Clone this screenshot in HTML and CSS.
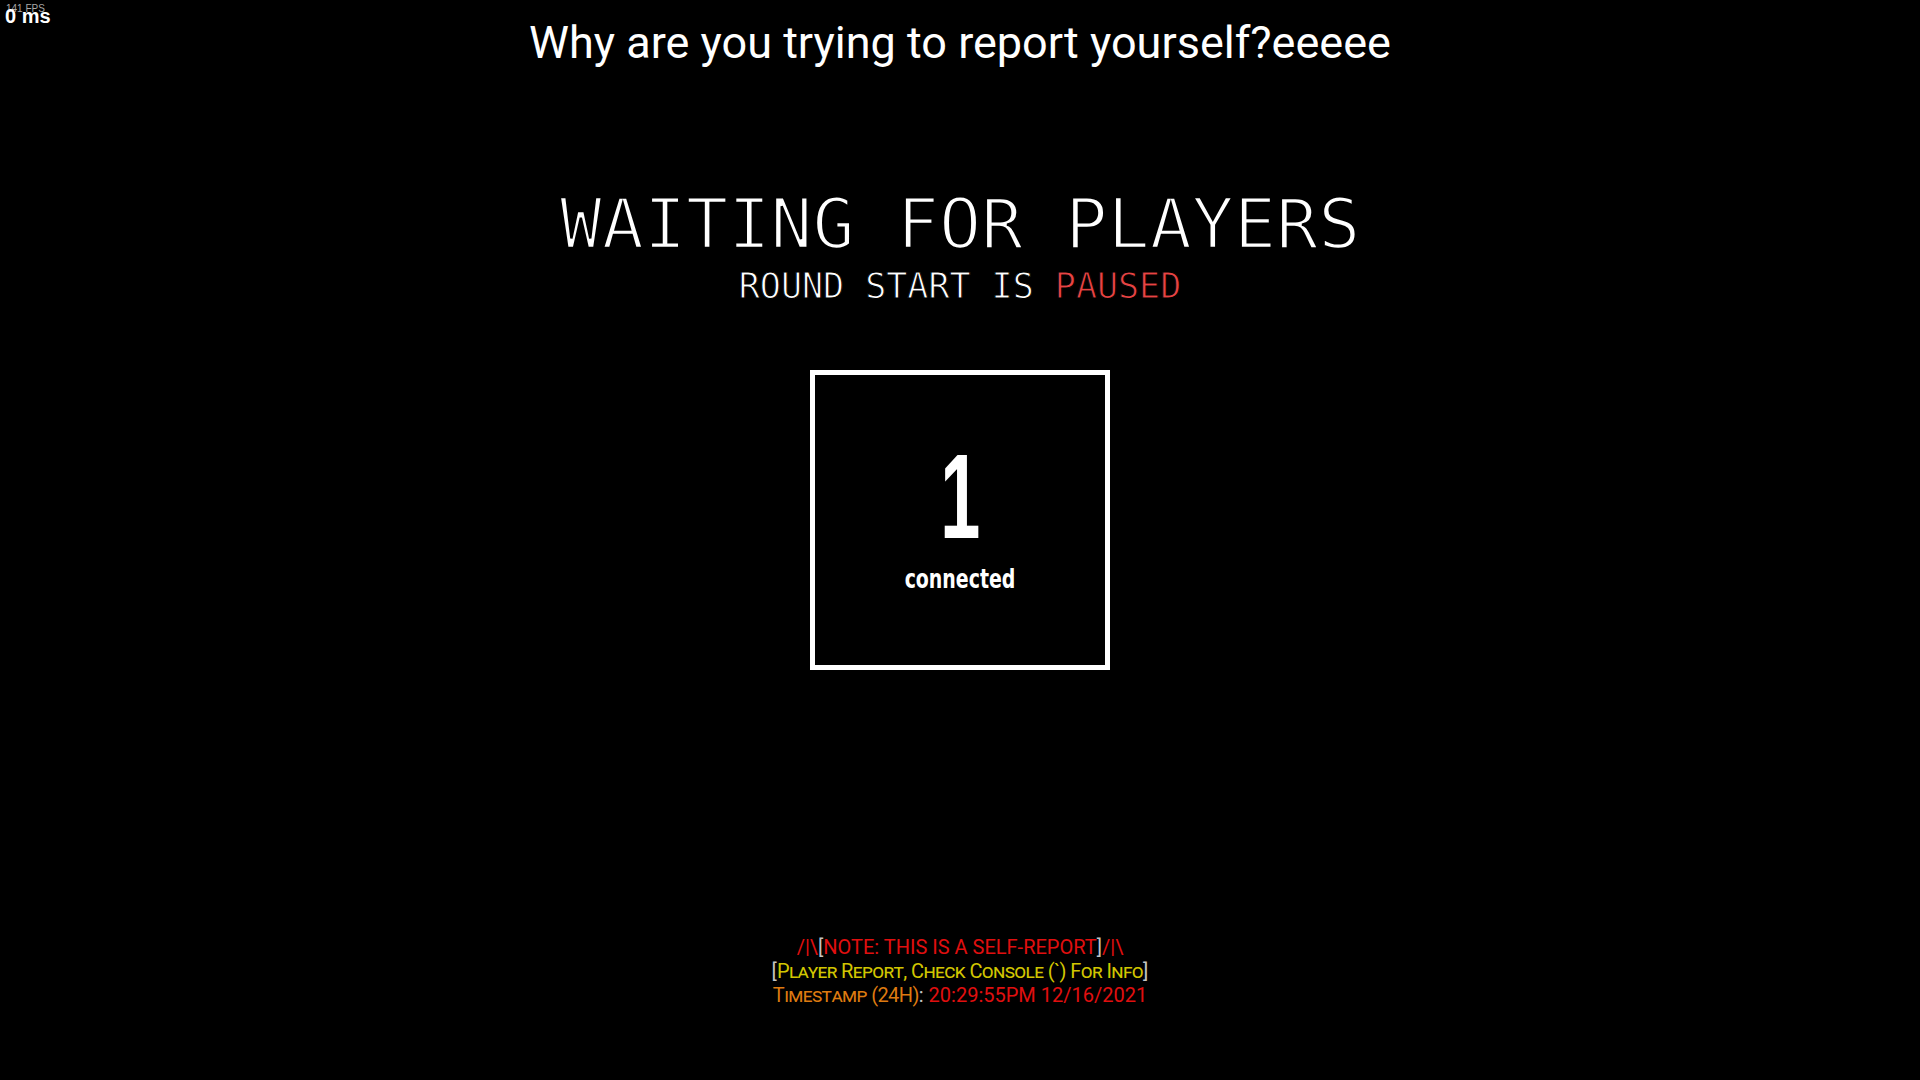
FILE: index.html
```html
<!DOCTYPE html>
<html lang="en">
<head>
<meta charset="utf-8">
<title>Waiting for players</title>
<link rel="stylesheet" href="styles.css">
</head>
<body>
<div class="hud">
  <span class="hud-fps">141 FPS</span>
  <span class="hud-ms">0 ms</span>
</div>
<main class="screen">
  <h1 class="title">Why are you trying to report yourself?eeeee</h1>
  <h2 class="waiting">WAITING FOR PLAYERS</h2>
  <p class="status">ROUND START IS <span class="paused">PAUSED</span></p>
  <div class="counter">
    <div class="count">1</div>
    <div class="count-label">connected</div>
  </div>
  <div class="report">
    <div class="report-line"><span class="red">/|\</span><span class="bracket">[</span><span class="red">NOTE: THIS IS A SELF-REPORT</span><span class="bracket">]</span><span class="red">/|\</span></div>
    <div class="report-line"><span class="bracket">[</span><span class="yellow sc">Player Report, Check Console (`) For Info</span><span class="bracket">]</span></div>
    <div class="report-line"><span class="orange sc">Timestamp (24H)</span><span class="bracket">:</span> <span class="red">20:29:55PM 12/16/2021</span></div>
  </div>
</main>
</body>
</html>
```

FILE: styles.css
```css
html, body {
  margin: 0;
  padding: 0;
  background: #000;
  height: 100%;
}

body {
  color: #fff;
  font-family: Roboto, "Liberation Sans", sans-serif;
  overflow: hidden;
}

.hud {
  position: absolute;
  left: 0;
  top: 0;
}

.hud-fps {
  position: absolute;
  left: 6px;
  top: 3px;
  font-family: "Liberation Sans", Arial, sans-serif;
  font-size: 10px;
  line-height: 12px;
  color: #a8a8a8;
  white-space: nowrap;
}

.hud-ms {
  position: absolute;
  left: 5px;
  top: 5px;
  font-family: "Liberation Sans", Arial, sans-serif;
  font-weight: bold;
  font-size: 20px;
  line-height: 22px;
  color: #fff;
  white-space: nowrap;
}

.screen {
  display: flex;
  flex-direction: column;
  align-items: center;
  height: 1080px;
}

.title {
  margin: 16px 0 0;
  font-family: Roboto, "Liberation Sans", sans-serif;
  font-weight: 400;
  font-size: 45px;
  line-height: 54px;
  color: #fff;
  white-space: nowrap;
}

.waiting {
  margin: 119px 0 0;
  font-family: "DejaVu Sans Mono", "Liberation Mono", monospace;
  font-weight: 400;
  font-size: 70px;
  line-height: 70px;
  color: #fff;
  -webkit-text-stroke: 2.4px #000;
  paint-order: normal;
}

.status {
  margin: 10px 0 0;
  font-family: "DejaVu Sans Mono", "Liberation Mono", monospace;
  font-size: 35px;
  line-height: 35px;
  color: #fff;
  -webkit-text-stroke: 1px #000;
}

.paused {
  color: #e84343;
}

.counter {
  margin-top: 66px;
  box-sizing: border-box;
  width: 300px;
  height: 300px;
  border: 5px solid #fff;
  display: flex;
  flex-direction: column;
  align-items: center;
  justify-content: flex-start;
  padding-top: 71px;
}

.count {
  font-family: "Liberation Sans", sans-serif;
  font-weight: bold;
  font-size: 120px;
  line-height: 100px;
  color: #fff;
  transform: scaleX(0.6);
}

.count-label {
  margin-top: 19px;
  font-family: "DejaVu Sans", sans-serif;
  font-stretch: condensed;
  font-weight: bold;
  font-size: 27px;
  line-height: 28px;
  color: #fff;
  transform: scaleX(0.78);
}

.report {
  margin-top: 265px;
  text-align: center;
  font-family: Roboto, "Liberation Sans", sans-serif;
  font-size: 20px;
  line-height: 24px;
}

.report-line {
  white-space: nowrap;
}

.sc {
  font-variant: small-caps;
  letter-spacing: -0.6px;
}

.red {
  color: #e00f0f;
}

.yellow {
  color: #d2c600;
}

.orange {
  color: #dd7a10;
}

.bracket {
  color: #c4c4c4;
}
```
